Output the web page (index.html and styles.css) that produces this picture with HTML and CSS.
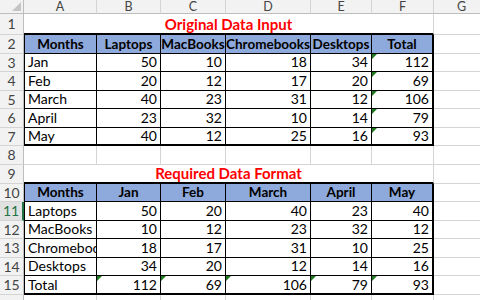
FILE: index.html
```html
<!DOCTYPE html>
<html>
<head>
<meta charset="utf-8">
<link rel="stylesheet" href="styles.css">
</head>
<body>
<div class="sheet">
  <div class="corner"></div>
  <div class="colh">A</div><div class="colh">B</div><div class="colh">C</div><div class="colh">D</div><div class="colh">E</div><div class="colh">F</div><div class="colh">G</div>

  <div class="rowh">1</div>
  <div class="c title">Original Data Input</div>
  <div class="c"></div>

  <div class="rowh">2</div>
  <div class="c t th first">Months</div><div class="c t th">Laptops</div><div class="c t th">MacBooks</div><div class="c t th">Chromebooks</div><div class="c t th">Desktops</div><div class="c t th lastcol">Total</div>
  <div class="c"></div>

  <div class="rowh">3</div>
  <div class="c t first">Jan</div><div class="c t num">50</div><div class="c t num">10</div><div class="c t num">18</div><div class="c t num">34</div><div class="c t num lastcol flag">112</div>
  <div class="c"></div>

  <div class="rowh">4</div>
  <div class="c t first">Feb</div><div class="c t num">20</div><div class="c t num">12</div><div class="c t num">17</div><div class="c t num">20</div><div class="c t num lastcol flag">69</div>
  <div class="c"></div>

  <div class="rowh">5</div>
  <div class="c t first">March</div><div class="c t num">40</div><div class="c t num">23</div><div class="c t num">31</div><div class="c t num">12</div><div class="c t num lastcol flag">106</div>
  <div class="c"></div>

  <div class="rowh">6</div>
  <div class="c t first">April</div><div class="c t num">23</div><div class="c t num">32</div><div class="c t num">10</div><div class="c t num">14</div><div class="c t num lastcol flag">79</div>
  <div class="c"></div>

  <div class="rowh">7</div>
  <div class="c t first lastrow">May</div><div class="c t num lastrow">40</div><div class="c t num lastrow">12</div><div class="c t num lastrow">25</div><div class="c t num lastrow">16</div><div class="c t num lastcol lastrow flag">93</div>
  <div class="c"></div>

  <div class="rowh">8</div>
  <div class="c"></div><div class="c"></div><div class="c"></div><div class="c"></div><div class="c"></div><div class="c"></div><div class="c"></div>

  <div class="rowh">9</div>
  <div class="c title">Required Data Format</div>
  <div class="c"></div>

  <div class="rowh">10</div>
  <div class="c t th first">Months</div><div class="c t th">Jan</div><div class="c t th">Feb</div><div class="c t th">March</div><div class="c t th">April</div><div class="c t th lastcol">May</div>
  <div class="c"></div>

  <div class="rowh sel">11</div>
  <div class="c t first">Laptops</div><div class="c t num">50</div><div class="c t num">20</div><div class="c t num">40</div><div class="c t num">23</div><div class="c t num lastcol">40</div>
  <div class="c"></div>

  <div class="rowh">12</div>
  <div class="c t first">MacBooks</div><div class="c t num">10</div><div class="c t num">12</div><div class="c t num">23</div><div class="c t num">32</div><div class="c t num lastcol">12</div>
  <div class="c"></div>

  <div class="rowh">13</div>
  <div class="c t first">Chromebooks</div><div class="c t num">18</div><div class="c t num">17</div><div class="c t num">31</div><div class="c t num">10</div><div class="c t num lastcol">25</div>
  <div class="c"></div>

  <div class="rowh">14</div>
  <div class="c t first">Desktops</div><div class="c t num">34</div><div class="c t num">20</div><div class="c t num">12</div><div class="c t num">14</div><div class="c t num lastcol">16</div>
  <div class="c"></div>

  <div class="rowh">15</div>
  <div class="c t first lastrow">Total</div><div class="c t num lastrow flag">112</div><div class="c t num lastrow flag">69</div><div class="c t num lastrow flag">106</div><div class="c t num lastrow flag">79</div><div class="c t num lastcol lastrow flag">93</div>
  <div class="c"></div>

  <div class="rowh"></div>
  <div class="c"></div><div class="c"></div><div class="c"></div><div class="c"></div><div class="c"></div><div class="c"></div><div class="c"></div>
</div>
</body>
</html>
```

FILE: styles.css
```css
* { box-sizing: border-box; margin: 0; padding: 0; }
html, body { width: 480px; height: 300px; overflow: hidden; background: #fff; }
body { font-family: Lato, "Open Sans", sans-serif; }

.sheet {
  display: grid;
  grid-template-columns: 24px 73px 64px 65px 85px 61px 62px 56px;
  grid-template-rows: 14px 21px 19px 18px 19px 18px 19px 18px 19px 19px 18px 19px 18px 19px 18px 19px 20px;
  font-size: 14px;
  color: #000;
}

.corner {
  position: relative;
  background: #f2f2f2;
  border-right: 1px solid #bdbdbd;
  border-bottom: 1px solid #bdbdbd;
}
.corner::after {
  content: "";
  position: absolute;
  right: 2px;
  bottom: 2px;
  border-style: solid;
  border-width: 0 0 9px 9px;
  border-color: transparent transparent #c4c4c4 transparent;
}

.colh {
  background: #f2f2f2;
  color: #444;
  font-size: 12.5px;
  display: flex;
  align-items: center;
  justify-content: center;
  border-right: 1px solid #d4d4d4;
  border-bottom: 1px solid #bdbdbd;
  line-height: 13px;
}

.rowh {
  background: #f2f2f2;
  color: #444;
  font-size: 14px;
  display: flex;
  align-items: center;
  justify-content: center;
  border-right: 1px solid #bdbdbd;
  border-bottom: 1px solid #d4d4d4;
  line-height: 1;
  overflow: hidden;
}
.rowh.sel {
  background: #e1e1e1;
  color: #217346;
  border-right: 2px solid #217346;
}

.c {
  position: relative;
  display: flex;
  align-items: flex-end;
  padding: 0 3px 2px;
  white-space: nowrap;
  overflow: hidden;
  border-right: 1px solid #d4d4d4;
  border-bottom: 1px solid #d4d4d4;
  line-height: 1;
}

.title {
  grid-column: span 6;
  justify-content: center;
  color: #ff0000;
  font-weight: 700;
  font-size: 15px;
  padding-bottom: 1px;
  border-bottom: 2px solid #000;
}

.t { border-right: 1px solid #000; border-bottom: 1px solid #000; }
.t.first { border-left: 1px solid #000; }
.t.lastcol { border-right: 2px solid #000; }
.t.lastrow { border-bottom: 2px solid #000; padding-bottom: 1px; }

.th {
  background: #8ea9db;
  font-weight: 700;
  font-size: 13.5px;
  justify-content: center;
  padding: 0 1px 2px;
}

.num { justify-content: flex-end; }

.flag::before {
  content: "";
  position: absolute;
  left: 0;
  top: 0;
  border-style: solid;
  border-width: 5px 5px 0 0;
  border-color: #1d7a1d transparent transparent transparent;
}
```
